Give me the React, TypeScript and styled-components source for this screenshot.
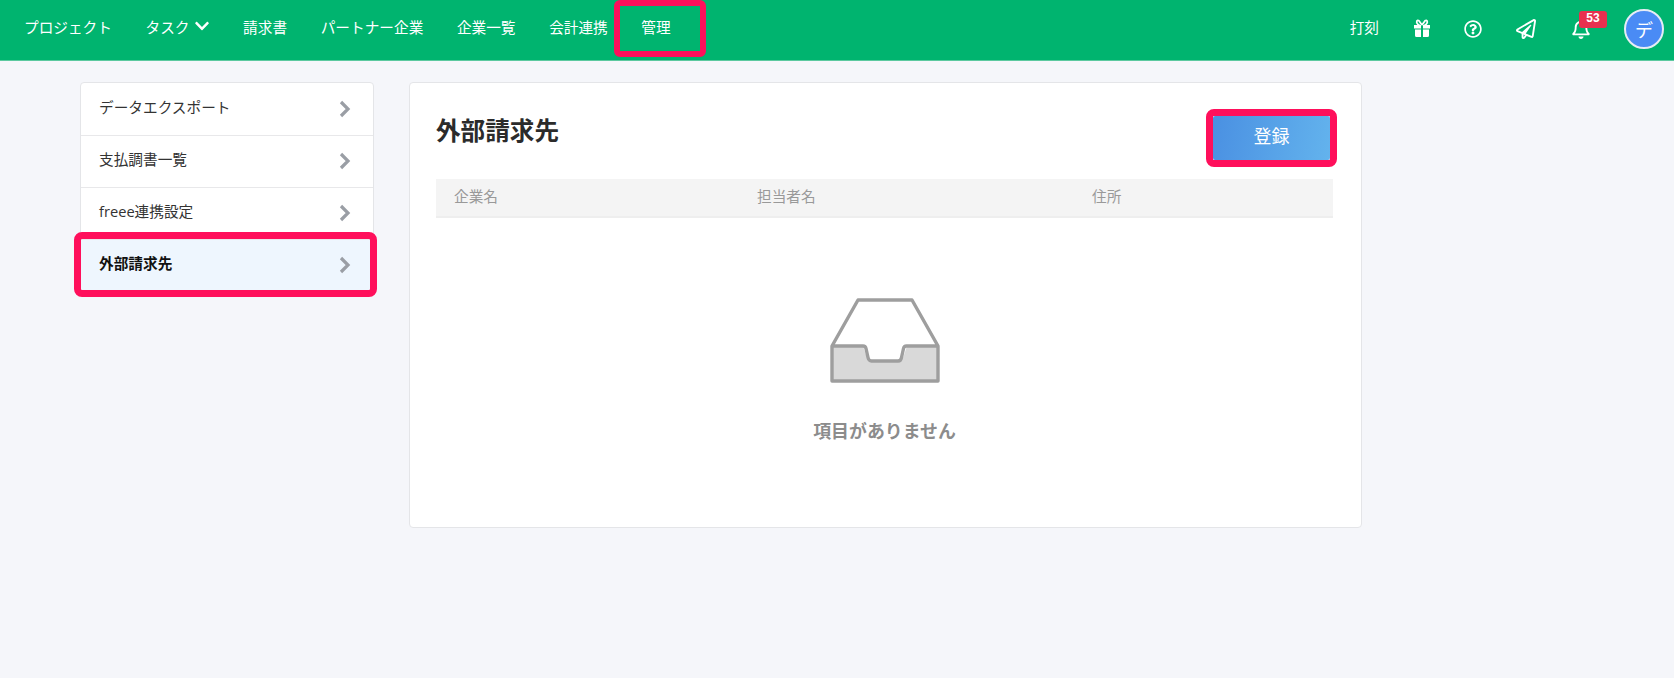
import React from "react";
import styled, { createGlobalStyle } from "styled-components";
import { FaRegPaperPlane, FaRegBell, FaRegQuestionCircle, FaChevronDown } from "react-icons/fa";

const Global = createGlobalStyle`
  html, body { margin: 0; padding: 0; height: 100%; background: #f5f6fa; }
  body { font-family: "Open Sans", "Noto Sans CJK JP", "Noto Sans", sans-serif; font-size: 14.67px; color: #333; }
`;

const Page = styled.div`
  width: 1674px;
  height: 678px;
  overflow: hidden;
  background: #f5f6fa;
`;

const Header = styled.header`
  box-sizing: border-box;
  height: 61px;
  padding-bottom: 3px;
  border-bottom: 1px solid #5cc99f;
  background: #00b46f;
  display: flex;
  align-items: center;
  justify-content: space-between;
  color: #fff;
`;

const NavList = styled.nav`
  display: flex;
  align-items: center;
  padding-left: 7.200px;
`;

const NavItem = styled.a`
  position: relative;
  box-sizing: border-box;
  display: flex;
  align-items: center;
  height: 54px;
  padding: 0 16.800px 5px;
  font-size: 14.67px;
  white-space: nowrap;
`;

const NavChevron = styled(FaChevronDown)`
  width: 16px;
  height: 16px;
  margin-left: 4px;
`;

const NavHighlight = styled.span`
  position: absolute;
  left: -11px;
  right: -19px;
  top: -2px;
  bottom: -1px;
  border: 6px solid #ff0f5b;
  border-radius: 6px;
  pointer-events: none;
`;

const Tools = styled.div`
  display: flex;
  align-items: center;
  padding-right: 10px;
`;

const Stamp = styled.span`
  font-size: 14.67px;
  margin-right: 34px;
  padding-bottom: 4px;
`;

const ToolIcon = styled.span<{ $w: number; $mr: number }>`
  position: relative;
  display: flex;
  align-items: center;
  justify-content: center;
  width: ${(p) => p.$w}px;
  margin-right: ${(p) => p.$mr}px;
  font-size: 18px;
`;

const Badge = styled.span`
  position: absolute;
  left: 7px;
  top: -8px;
  width: 28px;
  height: 17px;
  background: #e8304f;
  border-radius: 3px;
  font-family: "Liberation Sans", sans-serif;
  font-size: 12px;
  font-weight: 700;
  line-height: 14px;
  text-align: center;
`;

const Avatar = styled.span`
  box-sizing: border-box;
  width: 40px;
  height: 40px;
  border-radius: 50%;
  border: 2px solid #e6ecf5;
  background: #4a8bf5;
  display: flex;
  align-items: center;
  justify-content: center;
  font-size: 18px;
`;

const Body = styled.main`
  display: flex;
  align-items: flex-start;
  gap: 35px;
  padding: 21px 0 0 80px;
`;

const SideMenu = styled.ul`
  position: relative;
  box-sizing: border-box;
  width: 294px;
  margin: 0;
  padding: 1px 0 0;
  list-style: none;
  background: #fff;
  border: 1px solid #e4e5e8;
  border-radius: 4px;
`;

const SideRow = styled.li<{ $active?: boolean }>`
  position: relative;
  box-sizing: border-box;
  height: 52px;
  display: flex;
  align-items: center;
  justify-content: space-between;
  padding: 0 22px 0 18px;
  border-bottom: ${(p) => (p.$active ? "none" : "1px solid #e8e8ea")};
  background: ${(p) => (p.$active ? "#eef6fe" : "transparent")};
  font-weight: ${(p) => (p.$active ? 700 : 400)};
  color: ${(p) => (p.$active ? "#111" : "#333")};
`;

const SideLabel = styled.span`
  margin-bottom: 7px;
`;

const ChevronBox = styled.span`
  display: flex;
  margin-bottom: 2px;
`;

const SideHighlight = styled.span`
  position: absolute;
  left: -7px;
  right: -4px;
  top: -8px;
  bottom: -5px;
  border: 7px solid #ff0f5b;
  border-radius: 8px;
  pointer-events: none;
`;

const Card = styled.section`
  box-sizing: border-box;
  width: 953px;
  height: 446px;
  padding: 0 28px 0 26px;
  background: #fff;
  border: 1px solid #e4e5e8;
  border-radius: 4px;
`;

const CardHead = styled.div`
  display: flex;
  justify-content: space-between;
  align-items: flex-start;
  height: 96px;
  padding-top: 33px;
  box-sizing: border-box;
`;

const Title = styled.h1`
  margin: -1px 0 0;
  font-size: 24.6px;
  line-height: 32px;
  font-weight: 700;
  color: #2b2b2b;
`;

const RegisterButton = styled.button`
  position: relative;
  box-sizing: border-box;
  width: 117px;
  height: 44px;
  margin-right: 3px;
  padding: 0 0 6px;
  border: none;
  border-radius: 2px;
  background: linear-gradient(100deg, #4a90e2, #63b3ed);
  color: #fff;
  font-family: inherit;
  font-size: 18px;
`;

const ButtonHighlight = styled.span`
  position: absolute;
  inset: -7px;
  border: 7px solid #ff0f5b;
  border-radius: 8px;
  pointer-events: none;
`;

const TableHead = styled.div`
  box-sizing: border-box;
  height: 39px;
  display: grid;
  grid-template-columns: 303px 335px 1fr;
  align-items: center;
  padding: 0 0 5px 18px;
  background: #f4f4f4;
  border-bottom: 2px solid #eeeeee;
  color: #999;
  font-size: 14.67px;
`;

const Empty = styled.div`
  display: flex;
  flex-direction: column;
  align-items: center;
  padding-top: 80px;
`;

const EmptyText = styled.p`
  margin: 34px 0 0;
  font-size: 17.9px;
  line-height: 28px;
  font-weight: 700;
  color: #8c8c8c;
`;

const Chevron = () => (
  <ChevronBox>
    <svg width="12" height="18" viewBox="0 0 12 18">
      <path d="M2 2l7 7-7 7" fill="none" stroke="#9a9ea5" strokeWidth="3.2" />
    </svg>
  </ChevronBox>
);

const GiftIcon = () => (
  <svg width="18" height="19" viewBox="0 0 18 19">
    <path
      d="M1 6h7v3.500H1zM10 6h7v3.500h-7zM2 10.500h6V18H3.500Q2 18 2 16.500zM10 10.500h6v6Q16 18 14.500 18H10z"
      fill="#fff"
    />
    <path
      d="M9 6L6 1.800Q4.500.8 3.800 2.200 3.200 4 5 5.500L6.500 6M9 6l3-4.200q1.500-1 2.200.4.600 1.800-1.200 3.300L11.500 6"
      fill="none"
      stroke="#fff"
      strokeWidth="1.800"
    />
  </svg>
);

const InboxIcon = () => (
  <svg width="110" height="85" viewBox="0 0 110 85">
    <path d="M2 48h31l5 15h34l5-15h31v35H2z" fill="#d9d9d9" />
    <path
      d="M2 48L28 2h54l26 46v35H2zM2 48h31q2.500 0 3 2.500l2 9q.8 3.500 3.500 3.500H68q3 0 3.500-3.500l2-9q.5-2.500 3-2.500H108"
      fill="none"
      stroke="#9e9e9e"
      strokeWidth="3.400"
      strokeLinejoin="round"
    />
  </svg>
);

const navItems = ["プロジェクト", "タスク", "請求書", "パートナー企業", "企業一覧", "会計連携", "管理"];
const sideItems = ["データエクスポート", "支払調書一覧", "freee連携設定", "外部請求先"];

export default function App() {
  return (
    <Page>
      <Global />
      <Header>
        <NavList>
          {navItems.map((label) => (
            <NavItem key={label}>
              {label}
              {label === "タスク" && <NavChevron />}
              {label === "管理" && <NavHighlight />}
            </NavItem>
          ))}
        </NavList>
        <Tools>
          <Stamp>打刻</Stamp>
          <ToolIcon $w={18} $mr={33}><GiftIcon /></ToolIcon>
          <ToolIcon $w={18} $mr={33}><FaRegQuestionCircle /></ToolIcon>
          <ToolIcon $w={21} $mr={36}><FaRegPaperPlane size={20} /></ToolIcon>
          <ToolIcon $w={18} $mr={34}>
            <FaRegBell size={20} />
            <Badge>53</Badge>
          </ToolIcon>
          <Avatar>デ</Avatar>
        </Tools>
      </Header>
      <Body>
        <SideMenu>
          {sideItems.map((label, i) => (
            <SideRow key={label} $active={i === 3}>
              <SideLabel>{label}</SideLabel>
              <Chevron />
              {i === 3 && <SideHighlight />}
            </SideRow>
          ))}
        </SideMenu>
        <Card>
          <CardHead>
            <Title>外部請求先</Title>
            <RegisterButton>
              登録
              <ButtonHighlight />
            </RegisterButton>
          </CardHead>
          <TableHead>
            <span>企業名</span>
            <span>担当者名</span>
            <span>住所</span>
          </TableHead>
          <Empty>
            <InboxIcon />
            <EmptyText>項目がありません</EmptyText>
          </Empty>
        </Card>
      </Body>
    </Page>
  );
}
